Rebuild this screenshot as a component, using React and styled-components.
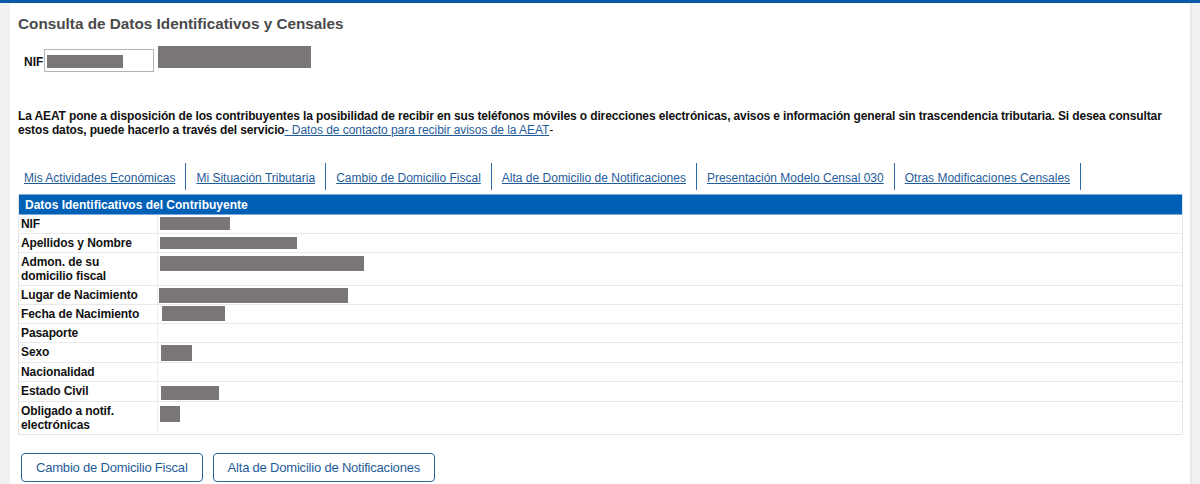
import React from "react";
import styled, { createGlobalStyle } from "styled-components";

const GlobalStyle = createGlobalStyle`
  html, body { margin: 0; padding: 0; background: #f1f1f1; }
  body { font-family: "Liberation Sans", Arial, Helvetica, sans-serif; color: #111; }
  * { box-sizing: border-box; }
`;

const TopBar = styled.div`
  height: 3px;
  background: #0b5aa9;
`;

const Page = styled.div`
  display: flex;
  padding: 0 10px;
`;

const Panel = styled.main`
  flex: 1;
  background: #fff;
  min-height: 481px;
  padding: 11px 7px 0 8px;
  box-shadow: 1px 0 3px rgba(0, 0, 0, 0.08);
`;

const Title = styled.h1`
  margin: 0;
  font-size: 15.3px;
  line-height: 20px;
  font-weight: bold;
  color: #4a4a4a;
`;

const NifRow = styled.div`
  display: flex;
  align-items: flex-start;
  margin-top: 12px;
  padding-left: 6px;
  height: 26px;
`;

const NifLabel = styled.span`
  margin-top: 9px;
  font-size: 12px;
  line-height: 14px;
  font-weight: bold;
  width: 20px;
`;

const NifInput = styled.div`
  margin-top: 3px;
  width: 110px;
  height: 23px;
  border: 1px solid #b4b4b4;
  padding: 5px 0 0 2px;
`;

const Redacted = styled.span`
  display: block;
  background: #7b7676;
  width: ${(p) => p.$w}px;
  height: ${(p) => p.$h}px;
  margin-left: ${(p) => p.$ml || 0}px;
  margin-top: ${(p) => p.$mt || 0}px;
`;

const Intro = styled.p`
  margin: 37px 0 0;
  font-size: 12px;
  line-height: 14px;
  font-weight: bold;
  letter-spacing: -0.13px;
  color: #111;
`;

const Link = styled.a`
  color: #1f5c9a;
  text-decoration: underline;
  font-weight: normal;
  letter-spacing: -0.05px;
  cursor: pointer;
`;

const Dash = styled.span`
  font-weight: normal;
`;

const TabList = styled.nav`
  display: flex;
  margin-top: 26px;
  padding-left: 6px;
  height: 27px;
`;

const Tab = styled.a`
  display: flex;
  align-items: center;
  padding: 2px 10px 0;
  border-right: 1px solid #2d6aa3;
  font-size: 12px;
  color: #1f5c9a;
  text-decoration: underline;
  white-space: nowrap;
  cursor: pointer;
  &:first-child { padding-left: 0; }
`;

const Table = styled.div`
  margin-top: 4px;
  border: 1px solid #e6e6e6;
  border-top: none;
`;

const TableHead = styled.div`
  background: #0060b6;
  color: #fff;
  font-size: 12px;
  font-weight: bold;
  line-height: 14px;
  padding: 3px 6px 2px;
  border-top: 1px solid #7fa9d6;
  border-bottom: 1px solid #7fa9d6;
`;

const Row = styled.div`
  display: grid;
  grid-template-columns: 139px 1fr;
  border-bottom: 1px solid #e9e9e9;
  &:last-child { border-bottom: none; }
`;

const Label = styled.div`
  font-size: 12px;
  line-height: 14px;
  font-weight: bold;
  letter-spacing: -0.1px;
  padding: 2px 3px 2px 2px;
  border-right: 1px solid #ececec;
  color: #111;
`;

const Value = styled.div`
  padding: 1px 1px;
`;

const Buttons = styled.div`
  display: flex;
  gap: 10px;
  margin-top: 18px;
  padding-left: 3px;
`;

const Button = styled.button`
  height: 29px;
  padding: 0 14px;
  background: #fff;
  border: 1px solid #2a6496;
  border-radius: 4px;
  color: #1f5c9a;
  font-family: "Liberation Sans", Arial, Helvetica, sans-serif;
  font-size: 13px;
  letter-spacing: -0.2px;
  cursor: pointer;
`;

const rows = [
  { label: "NIF", r: { w: 70, h: 13, ml: 1, mt: 1 } },
  { label: "Apellidos y Nombre", r: { w: 137, h: 12, ml: 1, mt: 2 } },
  { label: ["Admon. de su", "domicilio fiscal"], r: { w: 204, h: 15, ml: 1, mt: 2 } },
  { label: "Lugar de Nacimiento", r: { w: 189, h: 15, ml: 0, mt: 1 } },
  { label: "Fecha de Nacimiento", r: { w: 63, h: 15, ml: 3, mt: 0 } },
  { label: "Pasaporte" },
  { label: "Sexo", r: { w: 31, h: 16, ml: 2, mt: 1 } },
  { label: "Nacionalidad" },
  { label: "Estado Civil", r: { w: 58, h: 14, ml: 2, mt: 3 } },
  { label: ["Obligado a notif.", "electrónicas"], r: { w: 20, h: 16, ml: 1, mt: 3 } },
];

const tabs = [
  "Mis Actividades Económicas",
  "Mi Situación Tributaria",
  "Cambio de Domicilio Fiscal",
  "Alta de Domicilio de Notificaciones",
  "Presentación Modelo Censal 030",
  "Otras Modificaciones Censales",
];

export default function App() {
  return (
    <>
      <GlobalStyle />
      <TopBar />
      <Page>
        <Panel>
          <Title>Consulta de Datos Identificativos y Censales</Title>
          <NifRow>
            <NifLabel>NIF</NifLabel>
            <NifInput>
              <Redacted $w={76} $h={13} />
            </NifInput>
            <Redacted $w={153} $h={22} $ml={4} />
          </NifRow>
          <Intro>
            La AEAT pone a disposición de los contribuyentes la posibilidad de recibir en sus teléfonos
            móviles o direcciones electrónicas, avisos e información general sin trascendencia tributaria.
            Si desea consultar estos datos, puede hacerlo a través del servicio
            <Link>- Datos de contacto para recibir avisos de la AEAT</Link>
            <Dash>-</Dash>
          </Intro>
          <TabList>
            {tabs.map((t) => (
              <Tab key={t}>{t}</Tab>
            ))}
          </TabList>
          <Table>
            <TableHead>Datos Identificativos del Contribuyente</TableHead>
            {rows.map((row, i) => (
              <Row key={i}>
                <Label>
                  {Array.isArray(row.label)
                    ? row.label.map((l, j) => (
                        <React.Fragment key={j}>
                          {j > 0 && <br />}
                          {l}
                        </React.Fragment>
                      ))
                    : row.label}
                </Label>
                <Value>
                  {row.r && <Redacted $w={row.r.w} $h={row.r.h} $ml={row.r.ml} $mt={row.r.mt} />}
                </Value>
              </Row>
            ))}
          </Table>
          <Buttons>
            <Button>Cambio de Domicilio Fiscal</Button>
            <Button>Alta de Domicilio de Notificaciones</Button>
          </Buttons>
        </Panel>
      </Page>
    </>
  );
}
